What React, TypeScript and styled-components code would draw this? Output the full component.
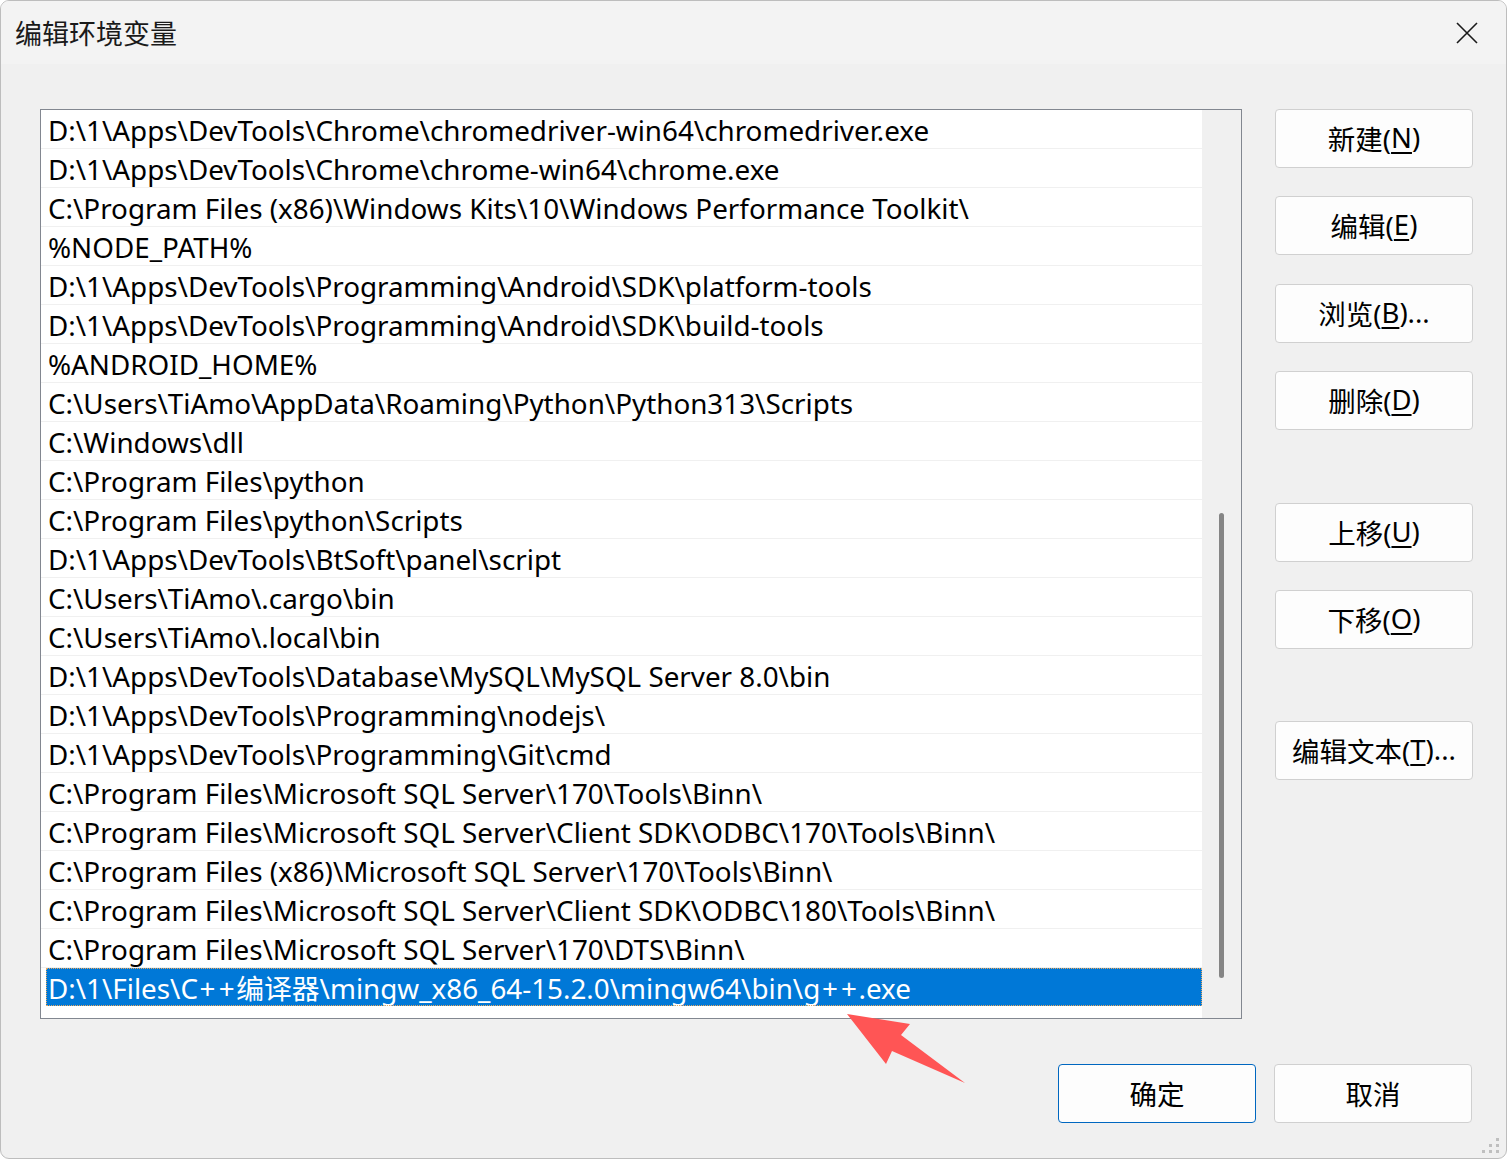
import React from "react";
import styled, { createGlobalStyle } from "styled-components";

const GlobalStyle = createGlobalStyle`
  html, body {
    margin: 0;
    padding: 0;
    background: #ffffff;
  }
  body {
    font-family: "Noto Sans", "Noto Sans CJK SC", sans-serif;
    color: #000;
  }
`;

const Window = styled.div`
  position: relative;
  width: 1507px;
  height: 1159px;
  box-sizing: border-box;
  border: 1px solid #bdbdbd;
  border-radius: 9px;
  background: #f0f0f0;
  overflow: hidden;
  display: flex;
  flex-direction: column;
`;

const TitleBar = styled.div`
  height: 63px;
  flex: none;
  box-sizing: border-box;
  background: #f3f3f3;
  display: flex;
  align-items: center;
  justify-content: space-between;
  padding: 0 28px 0 14px;
`;

const Title = styled.div`
  font-family: "Noto Sans CJK SC", sans-serif;
  font-size: 27px;
  color: #1a1a1a;
`;

const CloseButton = styled.div`
  width: 22px;
  height: 22px;
  display: flex;
`;

const Body = styled.div`
  display: grid;
  grid-template-columns: 1202px 198px;
  column-gap: 33px;
  padding: 45px 0 0 39px;
`;

const ListBox = styled.div`
  height: 910px;
  box-sizing: border-box;
  border: 1px solid #828790;
  background: #fff;
  display: grid;
  grid-template-columns: 1161px 1fr;
`;

const Rows = styled.div`
  display: flex;
  flex-direction: column;
  overflow: hidden;
`;

const Row = styled.div<{ $selected?: boolean }>`
  height: 38px;
  line-height: 40px;
  font-size: 27.8px;
  white-space: nowrap;
  box-sizing: content-box;
  padding-left: ${(p) => (p.$selected ? "2px" : "7px")};
  margin-left: ${(p) => (p.$selected ? "5px" : "0")};
  border-bottom: ${(p) => (p.$selected ? "none" : "1px solid #f0f0f0")};
  background: ${(p) => (p.$selected ? "#0078d7" : "transparent")};
  color: ${(p) => (p.$selected ? "#fff" : "#000")};
  outline: ${(p) => (p.$selected ? "1px dotted #e8a860" : "none")};
  outline-offset: -1px;
`;

const Plus = styled.span`
  padding: 0 1.6px;
`;

const ScrollTrack = styled.div`
  background: #f0f0f0;
  padding: 403px 0 0 17px;
`;

const ScrollThumb = styled.div`
  width: 5px;
  height: 465px;
  border-radius: 3px;
  background: #858585;
`;

const SideButtons = styled.div`
  display: flex;
  flex-direction: column;
`;

const Button = styled.div<{ $primary?: boolean; $space?: number }>`
  width: 198px;
  height: 59px;
  box-sizing: border-box;
  margin-top: ${(p) => p.$space ?? 0}px;
  border: 1px solid ${(p) => (p.$primary ? "#0067c0" : "#d0d0d0")};
  border-radius: 4px;
  background: #fdfdfd;
  display: flex;
  align-items: center;
  justify-content: center;
  font-size: 27.5px;
  color: #000;
  padding-bottom: 2px;
  u {
    text-underline-offset: 4px;
  }
`;

const Footer = styled.div`
  display: flex;
  justify-content: flex-end;
  gap: 18px;
  padding: 45px 34px 0 0;
`;

const Pointer = styled.svg`
  position: absolute;
  left: 840px;
  top: 1008px;
`;

const Grip = styled.svg`
  position: absolute;
  right: 6px;
  bottom: 4px;
`;

const paths = [
  "D:\\1\\Apps\\DevTools\\Chrome\\chromedriver-win64\\chromedriver.exe",
  "D:\\1\\Apps\\DevTools\\Chrome\\chrome-win64\\chrome.exe",
  "C:\\Program Files (x86)\\Windows Kits\\10\\Windows Performance Toolkit\\",
  "%NODE_PATH%",
  "D:\\1\\Apps\\DevTools\\Programming\\Android\\SDK\\platform-tools",
  "D:\\1\\Apps\\DevTools\\Programming\\Android\\SDK\\build-tools",
  "%ANDROID_HOME%",
  "C:\\Users\\TiAmo\\AppData\\Roaming\\Python\\Python313\\Scripts",
  "C:\\Windows\\dll",
  "C:\\Program Files\\python",
  "C:\\Program Files\\python\\Scripts",
  "D:\\1\\Apps\\DevTools\\BtSoft\\panel\\script",
  "C:\\Users\\TiAmo\\.cargo\\bin",
  "C:\\Users\\TiAmo\\.local\\bin",
  "D:\\1\\Apps\\DevTools\\Database\\MySQL\\MySQL Server 8.0\\bin",
  "D:\\1\\Apps\\DevTools\\Programming\\nodejs\\",
  "D:\\1\\Apps\\DevTools\\Programming\\Git\\cmd",
  "C:\\Program Files\\Microsoft SQL Server\\170\\Tools\\Binn\\",
  "C:\\Program Files\\Microsoft SQL Server\\Client SDK\\ODBC\\170\\Tools\\Binn\\",
  "C:\\Program Files (x86)\\Microsoft SQL Server\\170\\Tools\\Binn\\",
  "C:\\Program Files\\Microsoft SQL Server\\Client SDK\\ODBC\\180\\Tools\\Binn\\",
  "C:\\Program Files\\Microsoft SQL Server\\170\\DTS\\Binn\\",
];

export default function App() {
  return (
    <>
      <GlobalStyle />
      <Window>
        <TitleBar>
          <Title>编辑环境变量</Title>
          <CloseButton>
            <svg width="22" height="22" viewBox="0 0 22 22">
              <path d="M1 1 L21 21 M21 1 L1 21" stroke="#1a1a1a" strokeWidth="1.6" />
            </svg>
          </CloseButton>
        </TitleBar>
        <Body>
          <ListBox>
            <Rows>
              {paths.map((p) => (
                <Row key={p}>{p}</Row>
              ))}
              <Row $selected>
                D:\1\Files\C<Plus>+</Plus><Plus>+</Plus>编译器\mingw_x86_64-15.2.0\mingw64\bin\g
                <Plus>+</Plus><Plus>+</Plus>.exe
              </Row>
            </Rows>
            <ScrollTrack>
              <ScrollThumb />
            </ScrollTrack>
          </ListBox>
          <SideButtons>
            <Button>新建(<u>N</u>)</Button>
            <Button $space={28}>编辑(<u>E</u>)</Button>
            <Button $space={29}>浏览(<u>B</u>)...</Button>
            <Button $space={28}>删除(<u>D</u>)</Button>
            <Button $space={73}>上移(<u>U</u>)</Button>
            <Button $space={28}>下移(<u>O</u>)</Button>
            <Button $space={72}>编辑文本(<u>T</u>)...</Button>
          </SideButtons>
        </Body>
        <Footer>
          <Button $primary>确定</Button>
          <Button>取消</Button>
        </Footer>
        <Pointer width="130" height="80" viewBox="840 1008 130 80">
          <polygon
            points="846,1013 909,1023 900,1034 964,1082 891,1050 885,1063"
            fill="#ff5555"
          />
        </Pointer>
        <Grip width="18" height="16" viewBox="0 0 18 16">
          <g fill="#bfbfbf">
            <rect x="14" y="0" width="3" height="3" />
            <rect x="7" y="6" width="3" height="3" />
            <rect x="14" y="6" width="3" height="3" />
            <rect x="0" y="12" width="3" height="3" />
            <rect x="7" y="12" width="3" height="3" />
            <rect x="14" y="12" width="3" height="3" />
          </g>
        </Grip>
      </Window>
    </>
  );
}
